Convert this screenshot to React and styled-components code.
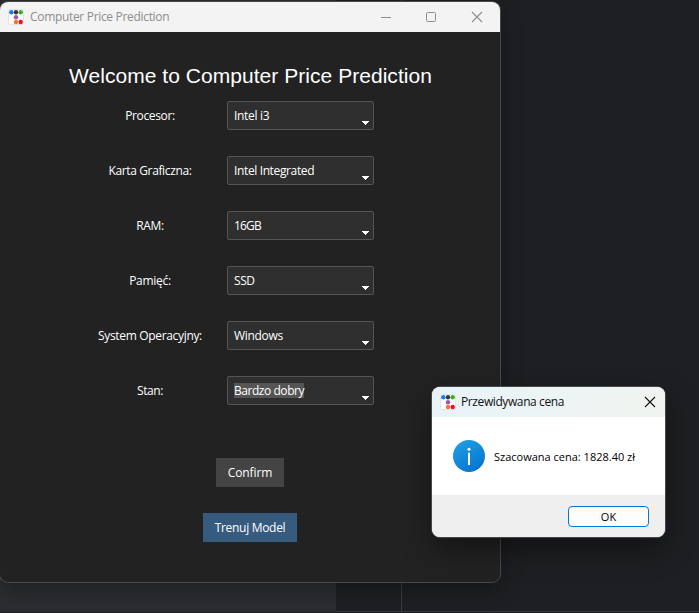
import React from "react";
import styled, { createGlobalStyle } from "styled-components";

const GlobalStyle = createGlobalStyle`
  * { box-sizing: border-box; }
  body { margin: 0; background: #1e1f22; overflow: hidden; }
`;

const Desktop = styled.main`
  position: relative;
  width: 699px;
  height: 613px;
  overflow: hidden;
  display: grid;
  grid-template-columns: 336px 66px 1fr;
  background: #1e1f22;
  font-family: "Open Sans", "Noto Sans", sans-serif;
  font-size: 12px;
  white-space: nowrap;
`;

const Pane = styled.div`
  margin-bottom: 1px;
  background: ${(p) => p.$bg};
  border-right: ${(p) => (p.$divider ? "1px solid #393b40" : "0")};
  border-bottom: 1px solid ${(p) => p.$edge};
`;

const Window = styled.section`
  position: absolute;
  left: ${(p) => p.$x}px;
  top: ${(p) => p.$y}px;
  width: ${(p) => p.$w}px;
  height: ${(p) => p.$h}px;
  display: flex;
  flex-direction: column;
  overflow: hidden;
  border-radius: 8px;
  background: ${(p) => p.$bg};
  box-shadow: 0 0 0 1px ${(p) => p.$line}, ${(p) => p.$shadow};
`;

const TitleBar = styled.header`
  flex: 0 0 30px;
  display: flex;
  align-items: center;
  padding-left: ${(p) => p.$inset}px;
  background: ${(p) => p.$bg};
  color: ${(p) => p.$color};
`;

const Caption = styled.span`
  flex: 1;
  margin-left: ${(p) => p.$gap}px;
  line-height: 16px;
  letter-spacing: ${(p) => p.$track}px;
`;

const Controls = styled.div`
  display: flex;
  gap: ${(p) => p.$gap || 0}px;
  padding-right: ${(p) => p.$right}px;
  svg { display: block; }
`;

const Content = styled.div`
  flex: 1;
  display: flex;
  flex-direction: column;
  align-items: center;
  padding-top: 30px;
  color: #fff;
`;

const Heading = styled.h1`
  margin: 0 0 11px;
  padding-left: 1px;
  font: 400 21px/28px "Liberation Sans", Arial, sans-serif;
  letter-spacing: 0.04px;
`;

const Form = styled.div`
  align-self: flex-start;
  display: grid;
  grid-template-columns: 154px 147px;
  row-gap: 26px;
  margin-left: 73px;
`;

const Label = styled.label`
  justify-self: center;
  line-height: 29px;
  letter-spacing: ${(p) => p.$track}px;
`;

const Combo = styled.div`
  height: 29px;
  display: flex;
  align-items: center;
  justify-content: space-between;
  padding: 0 4px 0 6px;
  border: 1px solid #555;
  border-radius: 2px;
  background: #2f2f2f;
  svg { align-self: flex-end; margin-bottom: 4px; }
`;

const Value = styled.span`
  line-height: 15px;
  letter-spacing: ${(p) => p.$track}px;
  background: ${(p) => (p.$selected ? "#555" : "transparent")};
`;

const Button = styled.button`
  width: ${(p) => p.$w}px;
  height: 29px;
  margin: ${(p) => p.$top}px 0 0;
  padding: 0;
  border: 0;
  background: ${(p) => p.$bg};
  color: #fff;
  font: inherit;
  letter-spacing: ${(p) => p.$track}px;
`;

const Message = styled.div`
  flex: 1;
  display: flex;
  align-items: center;
  gap: 9px;
  padding-left: 21px;
  background: #fff;
  color: #000;
  font-size: 11px;
`;

const MessageText = styled.p`
  margin: 0;
  padding-top: 2px;
  line-height: 16px;
`;

const Footer = styled.footer`
  flex: 0 0 42px;
  display: flex;
  justify-content: flex-end;
  padding: 11px 16px 0 0;
  background: #efefef;
`;

const OkButton = styled.button`
  width: 81px;
  height: 21px;
  padding: 0;
  border: 1px solid #0078d4;
  border-radius: 4px;
  background: #fdfdfd;
  color: #000;
  font: inherit;
  font-size: 11px;
  line-height: 19px;
`;

const AppIcon = () => (
  <svg width="16" height="16" viewBox="0 0 16 16">
    <rect x=".5" y=".5" width="15" height="15" rx="1" fill="#fff" stroke="#e4e4e4" />
    <circle cx="3.3" cy="3.2" r="2.2" fill="#1f7be8" />
    <circle cx="8" cy="3.2" r="2.2" fill="#373a3c" />
    <circle cx="12.7" cy="3.2" r="2.2" fill="#3cb117" />
    <circle cx="8" cy="8.2" r="2.2" fill="#9b56bb" />
    <circle cx="8" cy="13" r="2.2" fill="#ff7518" />
    <circle cx="12.7" cy="13" r="2.2" fill="#ff0039" />
  </svg>
);

const CloseIcon = ({ color }) => (
  <svg width="12" height="12" viewBox="0 0 12 12" fill="none" stroke={color} strokeWidth="1.1">
    <path d="M1 1 11 11M11 1 1 11" />
  </svg>
);

const Arrow = () => (
  <svg width="7" height="4" viewBox="0 0 7 4" fill="#fff" shapeRendering="crispEdges">
    <path d="M0 0H7V1H6V2H5V3H4V4H3V3H2V2H1V1H0Z" />
  </svg>
);

const InfoIcon = () => (
  <svg width="32" height="32" viewBox="0 0 32 32">
    <defs>
      <linearGradient id="info" x1="0.2" y1="0" x2="0.8" y2="1">
        <stop offset="0" stopColor="#1f9fe4" />
        <stop offset="1" stopColor="#0672cf" />
      </linearGradient>
    </defs>
    <circle cx="16" cy="16" r="16" fill="url(#info)" />
    <circle cx="16" cy="9.2" r="1.5" fill="#fff" />
    <rect x="15" y="12.7" width="2" height="12.3" fill="#fff" />
  </svg>
);

const fields = [
  { label: "Procesor:", value: "Intel i3", lt: -0.35, vt: -0.3 },
  { label: "Karta Graficzna:", value: "Intel Integrated", lt: -0.37, vt: -0.37 },
  { label: "RAM:", value: "16GB", lt: -0.3, vt: -0.8 },
  { label: "Pamięć:", value: "SSD", lt: -0.3, vt: -0.4 },
  { label: "System Operacyjny:", value: "Windows", lt: -0.33, vt: -0.3 },
  { label: "Stan:", value: "Bardzo dobry", lt: -0.4, vt: -0.45, selected: true },
];

export default function App() {
  return (
    <Desktop>
      <GlobalStyle />
      <Pane $bg="#2b2d30" $edge="#2d2733" />
      <Pane $bg="#1e1f22" $edge="#36343d" $divider />
      <Pane $bg="#1e1f22" $edge="#36343d" />

      <Window $x={0} $y={2} $w={500} $h={580} $bg="#222" $line="#484848" $shadow="0 8px 22px rgba(0,0,0,.3)">
        <TitleBar $inset={8} $bg="#f3f3f3" $color="#8e8e8e">
          <AppIcon />
          <Caption $gap={6} $track={-0.32}>Computer Price Prediction</Caption>
          <Controls $gap={34} $right={17}>
            <svg width="12" height="12" viewBox="0 0 12 12"><path d="M2 6.5H12" stroke="#8e8e8e" /></svg>
            <svg width="12" height="12" viewBox="0 0 12 12"><rect x="1.5" y="1.5" width="9" height="9" rx="1" fill="none" stroke="#8e8e8e" /></svg>
            <CloseIcon color="#8e8e8e" />
          </Controls>
        </TitleBar>
        <Content>
          <Heading>Welcome to Computer Price Prediction</Heading>
          <Form>
            {fields.map((f) => (
              <React.Fragment key={f.label}>
                <Label $track={f.lt}>{f.label}</Label>
                <Combo>
                  <Value $track={f.vt} $selected={f.selected}>{f.value}</Value>
                  <Arrow />
                </Combo>
              </React.Fragment>
            ))}
          </Form>
          <Button $w={68} $top={53} $bg="#444" $track={-0.1}>Confirm</Button>
          <Button $w={94} $top={26} $bg="#375a7f" $track={-0.3}>Trenuj Model</Button>
        </Content>
      </Window>

      <Window $x={432} $y={387} $w={233} $h={150} $bg="#fff" $line="#484848" $shadow="0 12px 30px rgba(0,0,0,.42)">
        <TitleBar $inset={8} $bg="linear-gradient(90deg, #e8f3f8, #f0f4f0)" $color="#111">
          <AppIcon />
          <Caption $gap={5} $track={-0.4}>Przewidywana cena</Caption>
          <Controls $right={9}><CloseIcon color="#111" /></Controls>
        </TitleBar>
        <Message>
          <InfoIcon />
          <MessageText>Szacowana cena: 1828.40 zł</MessageText>
        </Message>
        <Footer><OkButton>OK</OkButton></Footer>
      </Window>
    </Desktop>
  );
}
